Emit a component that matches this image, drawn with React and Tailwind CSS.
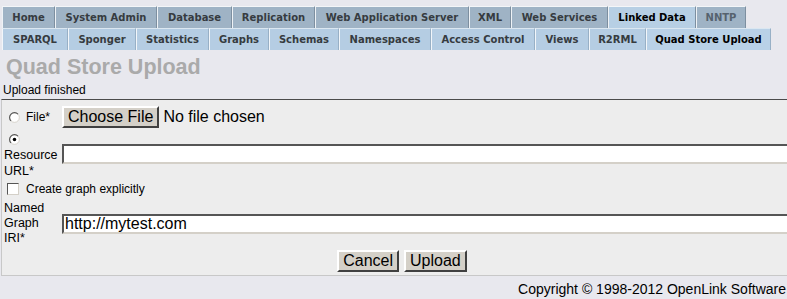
import React from 'react';

const topTabs = [
  { label: 'Home', w: 'w-[53px]' },
  { label: 'System Admin', w: 'w-[102px]' },
  { label: 'Database', w: 'w-[75px]' },
  { label: 'Replication', w: 'w-[83px]' },
  { label: 'Web Application Server', w: 'w-[154px]' },
  { label: 'XML', w: 'w-[42px]' },
  { label: 'Web Services', w: 'w-[97px]' },
  { label: 'Linked Data', w: 'w-[88px]', active: true },
  { label: 'NNTP', w: 'w-[50px]', muted: true },
];

const subTabs = [
  { label: 'SPARQL', w: 'w-[66px]' },
  { label: 'Sponger', w: 'w-[68px]' },
  { label: 'Statistics', w: 'w-[73px]' },
  { label: 'Graphs', w: 'w-[60px]' },
  { label: 'Schemas', w: 'w-[70px]' },
  { label: 'Namespaces', w: 'w-[92px]' },
  { label: 'Access Control', w: 'w-[104px]' },
  { label: 'Views', w: 'w-[54px]' },
  { label: 'R2RML', w: 'w-[57px]' },
  { label: 'Quad Store Upload', w: 'w-[125px]', active: true },
];

// classic sunken radio button
const Radio = ({ checked }) => (
  <svg width="11" height="11" viewBox="0 0 12 12" className="shrink-0">
    <circle cx="6" cy="6" r="5.3" fill="#fff" stroke="#d4d0c8" />
    <path d="M2.2 9.8 A5.3 5.3 0 0 1 9.8 2.2" fill="none" stroke="#555" strokeWidth="1.2" />
    {checked && <circle cx="6" cy="6" r="1.9" fill="#000" />}
  </svg>
);

const Button = ({ children, className = '' }) => (
  <button
    type="button"
    className={`h-[22px] whitespace-nowrap bg-[#d4d0c8] border-2 border-t-white border-l-white border-r-[#404040] border-b-[#404040] px-[4px] text-[16px] leading-none text-black ${className}`}
  >
    {children}
  </button>
);

const TextBox = ({ value = '' }) => (
  <div className="h-[20px] flex-1 bg-white border-2 border-t-[#555] border-l-[#555] border-r-[#d4d0c8] border-b-[#d4d0c8] flex items-center px-[1px] text-[16px] leading-none text-black">
    {value}
  </div>
);

export default function App() {
  return (
    <div className="w-[787px] h-[299px] overflow-hidden bg-[#e8e8ee] font-['Liberation_Sans',Arial,sans-serif] text-black">
      <div className="w-[808px]">
        {/* Tabs */}
        <div className="pt-[6px] pl-[2px] font-['DejaVu_Sans',Verdana,sans-serif] text-[10px] font-bold">
          <div className="flex h-[22px]">
            {topTabs.map((t) => (
              <div
                key={t.label}
                className={`${t.w} h-full flex items-center justify-center border-t border-l border-t-[#f4f6f8] border-l-[#eef2f6] border-r border-r-[#7d8fa0] ${
                  t.active ? 'bg-[#b7cfe4] text-black' : t.muted ? 'bg-[#9fb3c5] text-[#56626e]' : 'bg-[#9fb3c5] text-[#363b40]'
                }`}
              >
                {t.label}
              </div>
            ))}
          </div>
          <div className="flex h-[22px]">
            {subTabs.map((t) => (
              <div
                key={t.label}
                className={`${t.w} h-full flex items-center justify-center border-t border-l border-t-[#dbe7f1] border-l-[#f2f6fa] border-r border-r-[#98b0c6] ${
                  t.active ? 'bg-[#b9d1e7] text-black' : 'bg-[#b5cde3] text-[#363b40]'
                }`}
              >
                {t.label}
              </div>
            ))}
          </div>
        </div>

        {/* Title */}
        <h1 className="mt-[5px] pl-[6px] h-[24px] leading-[24px] text-[21.5px] font-bold text-[#aaaaaa]">
          Quad Store Upload
        </h1>
        <div className="mt-[4px] pl-[3px] h-[14px] leading-[14px] text-[12px]">Upload finished</div>

        {/* Form */}
        <div className="mt-[2px] ml-[1px] bg-[#ededed] border-t border-t-[#4a4a4a] border-l border-l-[#c8c8c8] border-b border-b-[#c8c8c8] pl-[2px] pb-[3px]">
          <div className="pt-[6px] flex items-center h-[28px]">
            <div className="w-[58px] pl-[5px] flex items-center gap-[6px] text-[12px]">
              <Radio />
              <span>File*</span>
            </div>
            <Button>Choose File</Button>
            <span className="ml-[4px] text-[16px]">No file chosen</span>
          </div>

          <div className="mt-[6px] h-[10px] pl-[5px] flex items-center">
            <Radio checked />
          </div>

          <div className="flex items-start">
            <div className="w-[58px] mt-[3px] text-[12.5px] leading-[16px]">
              Resource
              <br />
              URL*
            </div>
            <TextBox />
          </div>

          <div className="mt-[3px] h-[13px] pl-[3px] flex items-center gap-[6px] text-[12px]">
            <span className="w-[12px] h-[12px] bg-white border border-t-[#555] border-l-[#555] border-r-[#d4d0c8] border-b-[#d4d0c8]" />
            <span className="pl-[1px]">Create graph explicitly</span>
          </div>

          <div className="mt-[6px] flex items-center">
            <div className="w-[58px] text-[12.5px] leading-[15px]">
              Named
              <br />
              Graph
              <br />
              IRI*
            </div>
            <TextBox value="http://mytest.com" />
          </div>

          <div className="mt-[4px] pr-[8px] flex justify-center gap-[5px]">
            <Button>Cancel</Button>
            <Button>Upload</Button>
          </div>
        </div>

        {/* Footer */}
        <div className="mt-[5px] flex justify-end pr-[22px] text-[14px] leading-[16px]">
          Copyright © 1998-2012 OpenLink Software
        </div>
      </div>
    </div>
  );
}
